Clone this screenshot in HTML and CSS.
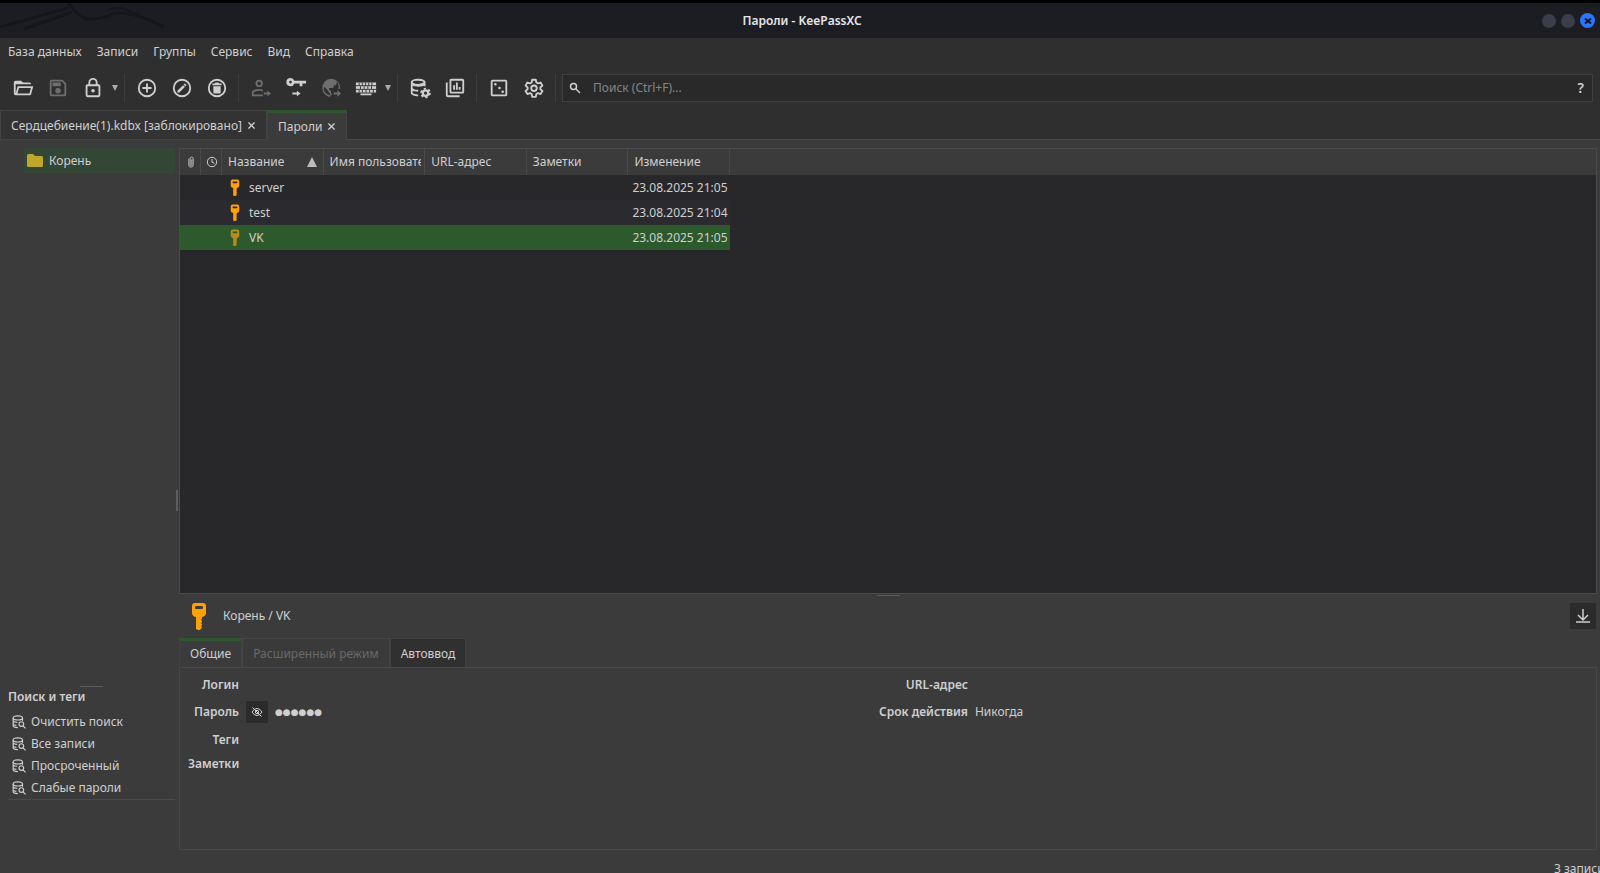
FILE: index.html
```html
<!doctype html>
<html lang="ru">
    <head>
        <meta charset="UTF-8" />
        <meta name="viewport" content="width=device-width, initial-scale=1.0" />
        <title>Пароли - KeePassXC</title>
        <link rel="stylesheet" href="styles.css">
    </head>
    <body>
        <!-- Shared icons -->
        <svg class="sprite" aria-hidden="true">
            <symbol id="key" viewBox="0 0 16 28">
                <path fill-rule="evenodd" d="M4 1h8q3 0 3 3v7q0 3-4 4v2l-1 1 1 1v1l-1 1 1 1v1l-1 1 1 1-1 2-2 1.500-3-1.500V15q-4-1-4-4V4q0-3 3-3zM5 4q-1 0-1 1.500t1 1.500h6q1 0 1-1.500t-1-1.500z" />
            </symbol>
            <symbol id="db-search" viewBox="0 0 24 24">
                <g fill="none" stroke="currentColor" stroke-width="2">
                    <ellipse cx="10" cy="5" rx="8" ry="3.500" />
                    <path d="M2 5v13c0 2 3 3.500 8 3.500M18 5v5M2 16c1 1.200 3 1.500 5.500 1.700M2 10.500c1.500 1.500 4 2 7 2" />
                    <circle cx="16" cy="15.500" r="4" />
                    <path d="M18.800 18.500l4.500 4.500" />
                </g>
            </symbol>
        </svg>

        <header class="titlebar">
            <svg class="titlebar-art" viewBox="0 0 170 35" fill="none" stroke="#15161b" stroke-width="3" aria-hidden="true">
                <path d="M0 24L68 5M24 26L72 9M68 0Q80 16 90 16Q104 16 112 11Q130 6 164 24" />
                <path d="M108 7q12-5 24 2l8 3" stroke-width="2" />
            </svg>
            <h1>Пароли - KeePassXC</h1>
            <div class="window-buttons">
                <button type="button" aria-label="Свернуть"></button>
                <button type="button" aria-label="Развернуть"></button>
                <button type="button" class="close" aria-label="Закрыть">
                    <svg viewBox="0 0 8 8"><path d="M1 1.500l6 5M7 1.500l-6 5" stroke="#10131c" stroke-width="2" /></svg>
                </button>
            </div>
        </header>

        <nav class="menubar">
            <button type="button">База данных</button>
            <button type="button">Записи</button>
            <button type="button">Группы</button>
            <button type="button">Сервис</button>
            <button type="button">Вид</button>
            <button type="button">Справка</button>
        </nav>

        <div class="toolbar">
            <button type="button" class="tool" aria-label="Открыть">
                <svg viewBox="0 0 24 24"><path d="M6.100 10L4 18V8h17a2 2 0 0 0-2-2h-7l-2-2H4a2 2 0 0 0-2 2v12a2 2 0 0 0 2 2h15c.900 0 1.700-.600 1.900-1.500L23.200 10H6.100M19 18H6l1.600-6h13L19 18z" /></svg>
            </button>
            <button type="button" class="tool" aria-label="Сохранить" disabled>
                <svg viewBox="0 0 24 24"><path d="M17 3H5a2 2 0 0 0-2 2v14a2 2 0 0 0 2 2h14a2 2 0 0 0 2-2V7l-4-4m2 16H5V5h11.200L19 7.800V19m-7-7a3 3 0 0 0 0 6 3 3 0 0 0 0-6M6 6h9v4H6V6z" /></svg>
            </button>
            <button type="button" class="tool" aria-label="Заблокировать">
                <svg viewBox="0 0 24 24"><path d="M12 17a2 2 0 1 0 0-4 2 2 0 0 0 0 4m6 3V10H6v10h12m0-12a2 2 0 0 1 2 2v10a2 2 0 0 1-2 2H6a2 2 0 0 1-2-2V10c0-1.100.900-2 2-2h1V6a5 5 0 0 1 10 0v2h1m-6-5a3 3 0 0 0-3 3v2h6V6a3 3 0 0 0-3-3z" /></svg>
            </button>
            <button type="button" class="arrow" aria-label="Варианты блокировки"></button>
            <span class="separator"></span>
            <button type="button" class="tool" aria-label="Добавить запись">
                <svg viewBox="0 0 24 24"><path d="M12 20a8 8 0 1 1 0-16 8 8 0 0 1 0 16m0-18a10 10 0 1 0 0 20 10 10 0 0 0 0-20m1 5h-2v4H7v2h4v4h2v-4h4v-2h-4V7z" /></svg>
            </button>
            <button type="button" class="tool" aria-label="Изменить запись">
                <svg viewBox="0 0 24 24"><path d="M12 2a10 10 0 1 0 0 20 10 10 0 0 0 0-20m0 2a8 8 0 1 1 0 16 8 8 0 0 1 0-16m3.100 3.100a.600.600 0 0 0-.400.200l-1 1 2.100 2.100 1-1c.200-.200.200-.600 0-.800l-1.300-1.300a.600.600 0 0 0-.400-.200M13.100 8.900L7 14.900V17h2.100l6.100-6.100-2.100-2z" /></svg>
            </button>
            <button type="button" class="tool" aria-label="Удалить запись">
                <svg viewBox="0 0 24 24"><path d="M12 2a10 10 0 1 0 0 20 10 10 0 0 0 0-20m0 2a8 8 0 1 1 0 16 8 8 0 0 1 0-16M7 7v2h10V7h-2.500l-1-1h-3l-1 1H7m1 3v6.500q0 1.500 1.500 1.500h5q1.500 0 1.500-1.500V10H8z" /></svg>
            </button>
            <span class="separator"></span>
            <button type="button" class="tool" aria-label="Скопировать имя" disabled>
                <svg viewBox="0 0 24 24"><path d="M10 3a4 4 0 1 0 0 8 4 4 0 0 0 0-8m0 2a2 2 0 1 1 0 4 2 2 0 0 1 0-4m0 8c-3 0-8 1.300-8 4v4h12v-2H4v-2c0-.600 3-2 6-2 1.500 0 3 .300 4.200.800V14c-1.400-.700-3-1-4.200-1m9 2v2h-4v2h4v2l4-3-4-3z" /></svg>
            </button>
            <button type="button" class="tool" aria-label="Скопировать пароль">
                <svg viewBox="0 0 24 24"><path d="M6 1a4.500 4.500 0 1 0 4.200 6H16v3h3V7h4V4H10.200A4.500 4.500 0 0 0 6 1m0 3a1.500 1.500 0 1 1 0 3 1.500 1.500 0 0 1 0-3m7 11v2H8v2h5v2l4-3-4-3z" /></svg>
            </button>
            <button type="button" class="tool" aria-label="Скопировать адрес" disabled>
                <svg viewBox="0 0 24 24">
                    <path fill-rule="evenodd" d="M12 2a10 10 0 1 0 1 20v-2h-2v-2l-2-2v-1l-4.800-4.700a8 8 0 0 0 6.800 9.700v2A10 10 0 0 0 13 22v-4h-1v-3h-1l-1-1v-2h4l1-1V9h2l1-1V5a8 8 0 0 1 2 8h2A10 10 0 0 0 12 2z" />
                    <path d="M19 14.500V17h-4v2h4v2.500l4-3.500-4-3.500z" />
                </svg>
            </button>
            <button type="button" class="tool" aria-label="Автоввод">
                <svg viewBox="0 0 24 24"><path d="M1 6h22v11H1V6m5 12h12v2H6v-2z" /><path d="M1 9.500h22M1 13.500h22M4.500 6v3.500M8 6v3.500M11.500 6v3.500M15 6v3.500M18.500 6v3.500M6 10v3M10 10v3M14 10v3M18 10v3M4.500 14v3M8 14v3M12 14v3M16 14v3M20 14v3" stroke="#2f2f2f" /></svg>
            </button>
            <button type="button" class="arrow" aria-label="Варианты автоввода"></button>
            <span class="separator"></span>
            <button type="button" class="tool" aria-label="Настройки базы данных">
                <svg viewBox="0 0 24 24">
                    <path d="M18 10V5.500C18 3.600 14.400 2 10 2S2 3.600 2 5.500v12C2 19.500 5.600 21 10 21v-2c-4 0-6-1-6-1.500V15c1.500.700 3.500 1 6 1v-2c-4 0-6-1.200-6-2V9.500c1.500.700 3.700 1 6 1s4.500-.300 6-1V10M10 4c4 0 6 1 6 1.500S14 7.500 10 7.500 4 6.500 4 5.500 6 4 10 4z" />
                    <circle cx="18" cy="17.500" r="3" fill="none" stroke="currentColor" stroke-width="2.500" />
                    <circle cx="18" cy="17.500" r="4.800" fill="none" stroke="currentColor" stroke-width="2" stroke-dasharray="2.500 2.530" />
                </svg>
            </button>
            <button type="button" class="tool" aria-label="Отчёты">
                <svg viewBox="0 0 24 24"><path d="M8 2h12a2 2 0 0 1 2 2v12a2 2 0 0 1-2 2H8a2 2 0 0 1-2-2V4c0-1.100.900-2 2-2m0 2v12h12V4H8M2 6h2v14h13v2H4a2 2 0 0 1-2-2V6m8 3h2v5h-2V9m3-3h2v8h-2V6m3 5h2v3h-2v-3z" /></svg>
            </button>
            <span class="separator"></span>
            <button type="button" class="tool" aria-label="Генератор паролей">
                <svg viewBox="0 0 24 24"><path d="M19 5v14H5V5h14m0-2H5a2 2 0 0 0-2 2v14c0 1.100.900 2 2 2h14a2 2 0 0 0 2-2V5a2 2 0 0 0-2-2z" /><circle cx="8" cy="8" r="1.400" /><circle cx="12.500" cy="12" r="1.400" /><circle cx="16" cy="16" r="1.400" /></svg>
            </button>
            <button type="button" class="tool" aria-label="Параметры">
                <svg viewBox="0 0 24 24"><path fill="none" stroke="currentColor" stroke-width="2" stroke-linejoin="round" d="M10 3h4l.600 3 1.700 1 2.900-1 2 3.400-2.300 2v1.800l2.300 2-2 3.400-2.900-1-1.700 1-.600 3h-4l-.600-3-1.700-1-2.900 1-2-3.400 2.300-2v-1.800l-2.300-2 2-3.400 2.900 1 1.700-1z" /><circle cx="12" cy="12.300" r="3" fill="none" stroke="currentColor" stroke-width="2" /></svg>
            </button>
            <span class="separator"></span>
            <div class="search">
                <label for="search" aria-label="Поиск">
                    <svg viewBox="0 0 12 12" fill="none" stroke="currentColor" stroke-width="1.500"><circle cx="4.500" cy="4.500" r="3" /><path d="M7 7l4 4" /></svg>
                </label>
                <input type="text" id="search" placeholder="Поиск (Ctrl+F)..." />
                <button type="button">?</button>
            </div>
        </div>

        <div class="db-tabs">
            <button type="button">Сердцебиение(1).kdbx [заблокировано]
                <svg viewBox="0 0 8 8"><path d="M0.500 0.500l7 7M7.500 0.500l-7 7" /></svg>
            </button>
            <button type="button" class="active">Пароли
                <svg viewBox="0 0 8 8"><path d="M0.500 0.500l7 7M7.500 0.500l-7 7" /></svg>
            </button>
        </div>

        <main class="workspace">
            <aside class="sidebar">
                <a href="#" class="group">
                    <svg viewBox="0 0 16 13"><path d="M1.500 0H6l2 2h6.500Q16 2 16 3.500v8q0 1.500-1.500 1.500h-13Q0 13 0 11.500v-10Q0 0 1.500 0z" /></svg>
                    Корень
                </a>
                <section class="tags">
                    <span class="handle"></span>
                    <h2>Поиск и теги</h2>
                    <ul>
                        <li><a href="#"><svg><use href="#db-search" /></svg>Очистить поиск</a></li>
                        <li><a href="#"><svg><use href="#db-search" /></svg>Все записи</a></li>
                        <li><a href="#"><svg><use href="#db-search" /></svg>Просроченный</a></li>
                        <li><a href="#"><svg><use href="#db-search" /></svg>Слабые пароли</a></li>
                    </ul>
                </section>
                <span class="side-handle"></span>
            </aside>

            <div class="content">
                <div class="entries">
                    <table>
                        <colgroup>
                            <col class="col-icon" />
                            <col class="col-icon" />
                            <col span="5" />
                        </colgroup>
                        <thead>
                            <tr>
                                <th aria-label="Вложения"><svg viewBox="0 0 8 14" fill="none" stroke="currentColor"><path d="M1.500 3v7.500a2.500 2.500 0 0 0 5 0V3a1.700 1.700 0 0 0-3.500 0v7a1 1 0 0 0 2 0V4" /></svg></th>
                                <th aria-label="Срок действия"><svg class="clock" viewBox="0 0 12 12" fill="none" stroke="currentColor"><circle cx="6" cy="6" r="4.700" /><path d="M6 3v3.300l2.500 1" /></svg></th>
                                <th><span class="sorted">Название</span></th>
                                <th><span class="clip">Имя пользователя</span></th>
                                <th>URL-адрес</th>
                                <th>Заметки</th>
                                <th>Изменение</th>
                            </tr>
                        </thead>
                        <tbody>
                            <tr>
                                <td></td><td></td>
                                <td><svg class="key"><use href="#key" /></svg>server</td>
                                <td></td><td></td><td></td>
                                <td class="date">23.08.2025 21:05</td>
                            </tr>
                            <tr>
                                <td></td><td></td>
                                <td><svg class="key"><use href="#key" /></svg>test</td>
                                <td></td><td></td><td></td>
                                <td class="date">23.08.2025 21:04</td>
                            </tr>
                            <tr class="selected">
                                <td></td><td></td>
                                <td><svg class="key"><use href="#key" /></svg>VK</td>
                                <td></td><td></td><td></td>
                                <td class="date">23.08.2025 21:05</td>
                            </tr>
                        </tbody>
                    </table>
                </div>

                <section class="preview">
                    <span class="handle"></span>
                    <div class="preview-head">
                        <svg class="key-large"><use href="#key" /></svg>
                        <h2>Корень / VK</h2>
                        <button type="button" aria-label="Скрыть панель">
                            <svg viewBox="0 0 14 14" fill="none" stroke="currentColor"><path d="M7 0v10.500M2 6l5 5 5-5" stroke-width="1.500" /><path d="M0 13h14" stroke-width="1.500" /></svg>
                        </button>
                    </div>
                    <div class="preview-tabs">
                        <button type="button" class="active">Общие</button>
                        <button type="button" disabled>Расширенный режим</button>
                        <button type="button">Автоввод</button>
                    </div>
                    <div class="details">
                        <dl>
                            <dt>Логин</dt><dd></dd>
                            <dt>Пароль</dt>
                            <dd>
                                <button type="button" aria-label="Показать пароль">
                                    <svg viewBox="0 0 12 12" fill="none" stroke="currentColor"><path d="M1 6q2-3.500 5-3.500T11 6Q9 9.500 6 9.500T1 6zM1.500 1.500l9 9" /><circle cx="6" cy="6" r="1.700" /></svg>
                                </button>
                                <span class="dots">●●●●●●</span>
                            </dd>
                            <dt>Теги</dt><dd></dd>
                            <dt>Заметки</dt><dd></dd>
                        </dl>
                        <dl>
                            <dt>URL-адрес</dt><dd></dd>
                            <dt>Срок действия</dt><dd>Никогда</dd>
                        </dl>
                    </div>
                </section>
            </div>
        </main>

        <footer class="statusbar"><span>3 записи</span></footer>
    </body>
</html>
```
FILE: styles.css
```css
:root {
    --bar: #2f2f2f;
    --pane: #3b3b3c;
    --view: #28282a;
    --line: #4a4a4b;
    --text: #cfcfd0;
    --muted: #6e6e6e;
    --green: #2d5a2d;
    --key: #ff9f0a;
}

*,
*::before,
*::after {
    box-sizing: border-box;
}

body {
    margin: 0;
    height: 100vh;
    overflow: hidden;
    display: flex;
    flex-direction: column;
    background: var(--pane);
    color: var(--text);
    font: 12px/18px "Noto Sans", sans-serif;
}

h1,
h2,
ul,
dl,
dd {
    margin: 0;
    padding: 0;
    font-size: 12px;
}

button,
input {
    border: 0;
    padding: 0;
    background: none;
    color: inherit;
    font: inherit;
}

a {
    color: inherit;
    text-decoration: none;
}

svg {
    display: block;
    flex: none;
}

.sprite {
    position: absolute;
    width: 0;
    height: 0;
}

/* Window title */
.titlebar {
    flex: none;
    display: grid;
    grid-template-columns: 1fr auto 1fr;
    align-items: center;
    height: 38px;
    padding: 0 5px;
    border-top: 3px solid #000;
    background: #1c1d23;
    position: relative;
}

.titlebar-art {
    position: absolute;
    left: 0;
    top: 0;
    width: 170px;
    height: 35px;
}

.titlebar h1 {
    grid-column: 2;
    padding-left: 4px;
    color: #e6e6e8;
    font-weight: 600;
}

.window-buttons {
    display: flex;
    align-items: center;
    justify-content: flex-end;
    gap: 5px;
}

.window-buttons button {
    width: 14px;
    height: 14px;
    border-radius: 50%;
    background: #3c3d4a;
}

.window-buttons .close {
    display: grid;
    place-items: center;
    width: 15px;
    height: 15px;
    background: #2777ff;
}

.close svg {
    width: 8px;
    height: 8px;
}

/* Menu and toolbar */
.menubar {
    flex: none;
    display: flex;
    gap: 15px;
    height: 30px;
    padding: 0 8px 2px;
    background: var(--bar);
}

.toolbar {
    flex: none;
    display: flex;
    align-items: center;
    height: 42px;
    padding: 0 7px 3px 5px;
    background: var(--bar);
}

.tool {
    display: grid;
    place-items: center;
    width: 35px;
    height: 35px;
}

.tool svg {
    width: 22px;
    height: 22px;
    fill: currentColor;
}

.tool:disabled {
    color: var(--muted);
}

.arrow {
    width: 10px;
    height: 20px;
}

.arrow::before {
    content: "";
    display: block;
    margin: 0 auto;
    width: 6px;
    border: 3px solid transparent;
    border-top: 6px solid #aaa;
    border-bottom: 0;
}

.separator {
    width: 1px;
    height: 28px;
    margin: 0 4px;
    background: #3d3d3d;
}

.search {
    flex: 1;
    display: flex;
    align-items: center;
    height: 28px;
    margin-left: 2px;
    padding: 0 8px 0 6px;
    border: 1px solid #404040;
    background: #29292a;
}

.search svg {
    width: 12px;
    height: 12px;
}

.search input {
    flex: 1;
    margin-left: 12px;
    outline: 0;
}

.search input::placeholder {
    color: #858585;
    opacity: 1;
}

.search button {
    font-size: 14px;
    font-weight: 600;
}

/* Database tabs */
.db-tabs {
    flex: none;
    display: flex;
    height: 30px;
    background: linear-gradient(var(--line), var(--line)) bottom / 100% 1px no-repeat var(--bar);
}

.db-tabs button {
    display: flex;
    align-items: center;
    gap: 6px;
    padding: 1px 11px 0 10px;
    border: 1px solid #424242;
    background: #333334;
}

.db-tabs .active {
    padding-top: 0;
    border-top: 3px solid #2f5530;
    border-bottom: 0;
    background: var(--pane);
}

.db-tabs svg {
    width: 7px;
    height: 7px;
    stroke: currentColor;
    stroke-width: 1.5;
}

/* Workspace */
.workspace {
    flex: 1;
    display: flex;
    min-height: 0;
    padding: 8px 3px 0 0;
}

.sidebar {
    position: relative;
    display: flex;
    flex-direction: column;
    justify-content: space-between;
    width: 179px;
    padding: 0 4px 50px 8px;
}

.group {
    display: flex;
    align-items: center;
    gap: 6px;
    height: 25px;
    margin-left: 16px;
    padding-left: 3px;
    background: #344636;
}

.group svg {
    width: 16px;
    height: 13px;
    fill: #bfa72b;
}

.handle {
    display: block;
    width: 23px;
    height: 1px;
    margin: 0 auto;
    background: #5c5c5d;
}

.side-handle {
    position: absolute;
    right: 1px;
    top: 342px;
    width: 2px;
    height: 21px;
    background: #5c5c5d;
}

.tags h2 {
    line-height: 20px;
    font-weight: 600;
}

.tags ul {
    padding-top: 4px;
    list-style: none;
    border-bottom: 1px solid var(--line);
}

.tags a {
    display: flex;
    align-items: center;
    gap: 5px;
    height: 22px;
    padding-left: 4px;
}

.tags svg {
    width: 14px;
    height: 14px;
}

.content {
    flex: 1;
    display: flex;
    flex-direction: column;
    min-width: 0;
}

/* Entry list */
.entries {
    flex: 1;
    min-height: 0;
    border: 1px solid var(--line);
    background: linear-gradient(var(--pane), var(--pane)) top / 100% 26px no-repeat var(--view);
}

table {
    width: 550px;
    table-layout: fixed;
    border-collapse: collapse;
}

.col-icon {
    width: 21px;
}

.entries tr {
    height: 25px;
}

.entries thead tr {
    height: 26px;
}

th {
    padding: 0 4px 0 6px;
    font-weight: 400;
    text-align: left;
    white-space: nowrap;
    box-shadow: inset -1px 0 #49494a;
}

th[aria-label] {
    padding: 0 4px;
}

th svg {
    width: 8px;
    height: 12px;
    margin: 0 auto;
}

th .clock {
    width: 12px;
}

.sorted {
    display: flex;
    align-items: center;
    justify-content: space-between;
    padding-right: 3px;
}

.sorted::after {
    content: "";
    border: 5px solid transparent;
    border-top: 0;
    border-bottom: 10px solid #bebebe;
}

.clip {
    display: block;
    overflow: hidden;
}

td {
    padding: 0 4px;
    white-space: nowrap;
}

tbody tr:nth-child(even) {
    background: #2b2b2f;
}

tbody .selected {
    background: var(--green);
}

.key {
    display: inline-block;
    width: 18px;
    height: 17px;
    margin-right: 5px;
    vertical-align: -4px;
    fill: var(--key);
}

.selected .key {
    fill: #b98c19;
}

.date {
    text-align: right;
}

/* Preview panel */
.preview {
    flex: none;
    padding-top: 1px;
}

.preview-head {
    display: flex;
    align-items: center;
    height: 42px;
    padding: 0 1px 2px 12px;
}

.key-large {
    width: 16px;
    height: 28px;
    fill: var(--key);
}

.preview-head h2 {
    flex: 1;
    margin-left: 16px;
    font-weight: 400;
}

.preview-head button {
    display: grid;
    place-items: center;
    width: 26px;
    height: 26px;
    background: #2b2b2c;
}

.preview-head button svg {
    width: 14px;
    height: 14px;
}

.preview-tabs {
    display: flex;
    height: 29px;
}

.preview-tabs button {
    padding: 1px 10px 0;
    border: 1px solid #414142;
    border-width: 1px 1px 0;
    background: #303031;
}

.preview-tabs .active {
    padding-top: 0;
    border-top: 3px solid #2f5530;
    background: var(--pane);
}

.preview-tabs button:disabled {
    border-color: #434443;
    background: #3a3a3a;
    color: #696969;
}

.details {
    display: grid;
    grid-template-columns: 49fr 51fr;
    height: 183px;
    padding: 3px 0 0 8px;
    border: 1px solid #474748;
}

dl {
    display: grid;
    grid-template-columns: 51px 1fr;
    grid-template-rows: 27px 27px 30px 17px;
    column-gap: 7px;
    align-content: start;
    align-items: center;
}

dl + dl {
    grid-template-columns: 90px 1fr;
}

dt {
    font-weight: 600;
    text-align: right;
    white-space: nowrap;
}

dd {
    display: flex;
    align-items: center;
    gap: 7px;
}

dd button {
    display: grid;
    place-items: center;
    width: 22px;
    height: 22px;
    background: #2b2b2c;
}

dd button svg {
    width: 12px;
    height: 12px;
}

.dots {
    font: 9px/18px "DejaVu Sans", sans-serif;
}

/* Status line runs past the window edge */
.statusbar {
    flex: none;
    display: flex;
    justify-content: flex-end;
    height: 23px;
    padding-top: 10px;
}

.statusbar span {
    width: 46px;
    white-space: nowrap;
}
```
